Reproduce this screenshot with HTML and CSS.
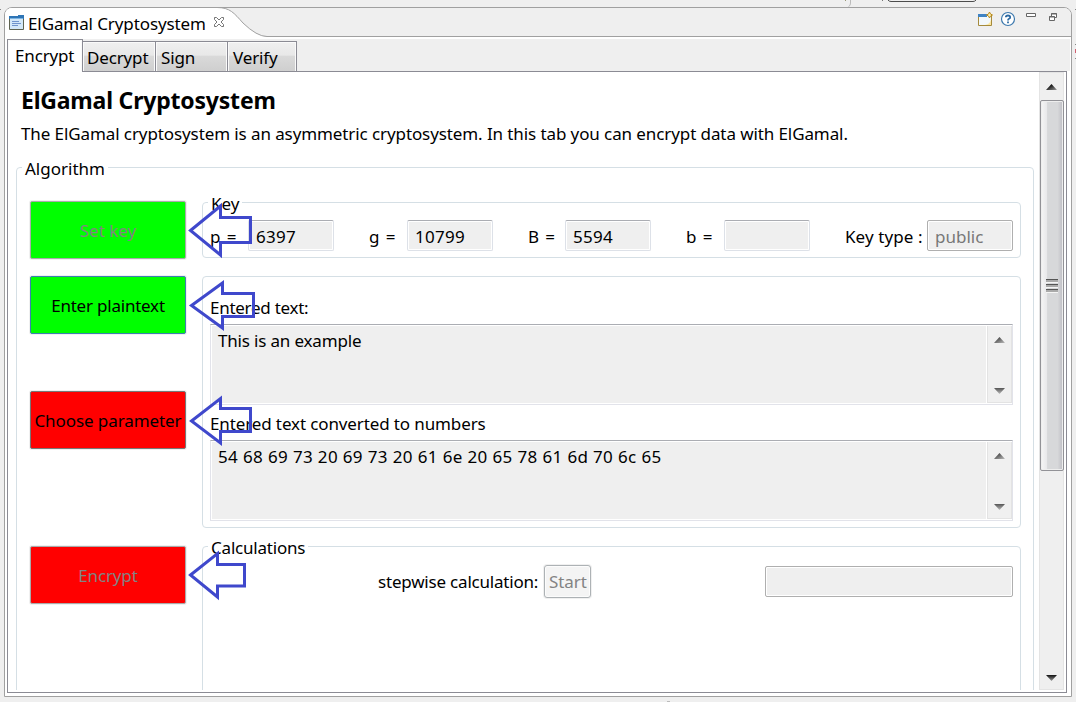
FILE: index.html
```
<!DOCTYPE html>
<html lang="en">
<head>
<meta charset="utf-8">
<title>ElGamal Cryptosystem</title>
<link rel="stylesheet" href="styles.css">
</head>
<body>
<svg class="edge" width="1076" height="702" viewBox="0 0 1076 702">
  <path d="M850.500 0v3q0 3-2 3.500" fill="none" stroke="#bbb"/>
  <path d="M845 0.500h1" stroke="#997"/><path d="M882.500 0v1" stroke="#777"/>
  <path d="M888 0q1 1.500 3 1.500h82q2 0 3-1.500" fill="none" stroke="#4c4c4c"/>
  <path d="M0 9.500h1M1075 9.500h1M1075 44.500h1M1075 58.500h1" stroke="#888"/>
  <path d="M1075.500 49v4" stroke="#d06070"/>
  <path d="M667 701.500h3" stroke="#bbb"/>
</svg>
<main class="part">
  <header class="part-head">
    <div class="part-tab">
      <svg class="tab-shape" width="270" height="32" viewBox="0 0 270 32">
        <path d="M0 32V7Q0 .5 7 .5H212C225 .5 229 6 238 16Q252 29.500 262 29.500H270V32Z" fill="#fff"/>
        <path d="M212 .5C225 .5 229 6 238 16Q252 29.500 262 29.500H270" fill="none" stroke="#a0a0a0"/>
      </svg>
      <svg class="doc-icon" width="16" height="16" viewBox="0 0 16 16">
        <path d="M.5 1.500h14v13H.5z" fill="#d3e8f8" stroke="#5e6350"/>
        <path d="M0 1h9V0h6v4H0z" fill="#2e75b6"/><path d="M1 3.500h13" stroke="#7db4e2"/>
        <path d="M3 6.500h7M3 8.500h9M3 10.500h6" stroke="#6f94cc"/>
      </svg>
      <span class="title">ElGamal Cryptosystem</span>
      <svg class="close" width="12" height="12" viewBox="0 0 12 12">
        <path d="M1.500 1.500h2L6 4l2.500-2.500h2v2L8 6l2.500 2.500v2h-2L6 8l-2.500 2.500h-2v-2L4 6 1.500 3.500z" fill="#fff" stroke="#666" stroke-width=".9"/>
      </svg>
    </div>
    <div class="tools">
      <svg width="16" height="16" viewBox="0 0 16 16">
        <path d="M1.500 3.500h13v11h-13z" fill="#f2f8fc" stroke="#a58a3c"/>
        <path d="M8 14q6-1 6-7v7z" fill="#fbe7a0"/>
        <path d="M1 3h9v3H1z" fill="#3f83c4"/>
        <path d="M12.500 1l1 2 2 1-2 1-1 2-1-2-2-1 2-1z" fill="#fff0b0" stroke="#b98a1c"/>
      </svg>
      <svg width="16" height="16" viewBox="0 0 16 16">
        <circle cx="8" cy="8" r="6.500" fill="#fff" stroke="#3b78ad" stroke-width="1.200"/>
        <path d="M5.800 6.300Q5.900 4.500 8 4.500T10.200 6.200Q10.200 7.200 9 7.800 8 8.300 8 9.400M8 10.500v1.800" fill="none" stroke="#2d6aa3" stroke-width="1.800"/>
      </svg>
      <svg width="16" height="16" viewBox="0 0 16 16"><path d="M3.500 2.500h9v3h-9z" fill="#fff" stroke="#666"/></svg>
      <svg width="16" height="16" viewBox="0 0 16 16">
        <path d="M5.500 2.500h5v4h-5z" fill="#fff" stroke="#666"/><path d="M5 3h6" stroke="#666"/>
        <path d="M3.500 5.500h5v4h-5z" fill="#fff" stroke="#666"/><path d="M3 6h6" stroke="#666"/>
      </svg>
    </div>
  </header>
  <nav class="tabs">
    <div class="tab active"><span>Encrypt</span></div>
    <div class="tab t-dec"><span>Decrypt</span></div>
    <div class="tab t-sign"><span>Sign</span></div>
    <div class="tab t-ver"><span>Verify</span></div>
  </nav>
  <div class="pane">
    <div class="content">
      <h1>ElGamal Cryptosystem</h1>
      <p class="desc"><span>The ElGamal cryptosystem is an asymmetric cryptosystem. In this tab you can encrypt data with ElGamal.</span></p>
      <section class="group algo">
        <div class="legend">Algorithm</div>
        <div class="columns">
          <div class="buttons">
            <div class="btn green off"><span>Set key</span></div>
            <div class="btn green focus"><span class="b-enter">Enter plaintext</span></div>
            <div class="btn red choose"><span class="b-choose">Choose parameter</span></div>
            <div class="btn red off enc"><span class="b-enc">Encrypt</span></div>
          </div>
          <div class="groups">
            <section class="group key">
              <div class="legend">Key</div>
              <div class="key-row">
                <span class="var">p =</span><div class="field"><span>6397</span></div>
                <span class="var">g =</span><div class="field"><span>10799</span></div>
                <span class="var">B =</span><div class="field"><span>5594</span></div>
                <span class="var">b =</span><div class="field"></div>
                <span class="key-type">Key type :</span><div class="field disabled"><span class="pub">public</span></div>
              </div>
            </section>
            <section class="group text">
              <div class="label"><span class="l-ent">Entered text:</span></div>
              <div class="area"><div class="area-text"><span class="a-one">This is an example</span></div>
                <div class="mini"><svg width="11" height="6" viewBox="0 0 11 6"><path d="M0 6L5.500 0 11 6z" fill="url(#up)"/></svg><svg width="11" height="6" viewBox="0 0 11 6"><path d="M0 0h11L5.500 6z" fill="url(#down)"/></svg></div>
              </div>
              <div class="label second"><span class="l-conv">Entered text converted to numbers</span></div>
              <div class="area"><div class="area-text"><span class="a-two">54 68 69 73 20 69 73 20 61 6e 20 65 78 61 6d 70 6c 65</span></div>
                <div class="mini"><svg width="11" height="6" viewBox="0 0 11 6"><path d="M0 6L5.500 0 11 6z" fill="url(#up)"/></svg><svg width="11" height="6" viewBox="0 0 11 6"><path d="M0 0h11L5.500 6z" fill="url(#down)"/></svg></div>
              </div>
            </section>
            <section class="group calc">
              <div class="legend"><span class="l-calc">Calculations</span></div>
              <div class="calc-row"><span class="step">stepwise calculation:</span><div class="start"><span>Start</span></div><div class="field disabled wide"></div></div>
            </section>
          </div>
        </div>
      </section>
    </div>
    <div class="scroll">
      <svg class="arr" width="11" height="6" viewBox="0 0 11 6"><defs>
        <linearGradient id="up" x1="0" y1="0" x2="1" y2="1"><stop offset=".2" stop-color="#444"/><stop offset="1" stop-color="#bbb"/></linearGradient>
        <linearGradient id="down" x1="0" y1="0" x2="0" y2="1"><stop offset="0" stop-color="#555"/><stop offset="1" stop-color="#bbb"/></linearGradient>
        <linearGradient id="dark" x1="0" y1="0" x2="1" y2="1"><stop offset=".3" stop-color="#111"/><stop offset="1" stop-color="#999"/></linearGradient>
        <linearGradient id="darkdown" x1="0" y1="0" x2="0" y2="1"><stop offset="0" stop-color="#111"/><stop offset="1" stop-color="#999"/></linearGradient></defs>
        <path d="M0 6L5.500 0 11 6z" fill="url(#dark)"/></svg>
      <div class="thumb"><i></i><i></i><i></i></div>
      <svg class="arr low" width="11" height="6" viewBox="0 0 11 6"><path d="M0 0h11L5.500 6z" fill="url(#darkdown)"/></svg>
    </div>
  </div>
</main>
<svg class="arrows" width="1076" height="702" viewBox="0 0 1076 702" fill="none" stroke="#3f48cc" stroke-width="3">
  <path d="M190.500 230.500L220.500 206V217.500H250.500V242.500H220.500V255z"/>
  <path d="M191.500 305.500L222.500 283V293.500H253.500V316.500H222.500V328z"/>
  <path d="M191.500 421L220.500 398.500V408.500H250.500V431.500H220.500V443z"/>
  <path d="M190.500 575L217.500 553.500V564.500H244.500V586H217.500V597z"/>
</svg>
</body>
</html>
```
FILE: styles.css
```
* { box-sizing: border-box; }
body { margin: 0; width: 1076px; height: 702px; padding: 7px 4px 0; overflow: hidden; position: relative; background: #efefef; font: 17px/24px "Noto Sans", "Open Sans", sans-serif; color: #000; }
h1, p { margin: 0; }
span { white-space: nowrap; }
.edge, .arrows { position: absolute; left: 0; top: 0; pointer-events: none; }
.part { height: 690px; border: 1px solid #a0a0a0; border-radius: 8px 8px 0 0; background: #fff; overflow: hidden; display: flex; flex-direction: column; }
.part-head { height: 29px; flex: none; display: flex; justify-content: space-between; background: #efefef; border-bottom: 1px solid #a0a0a0; }
.part-tab { position: relative; display: flex; width: 270px; height: 31px; padding-left: 4px; }
.tab-shape { position: absolute; left: 0; top: -1px; }
.doc-icon, .part-tab .title, .close { position: relative; }
.doc-icon { margin-top: 7px; }
.part-tab .title { margin: 4px 0 0 3px; width: 185px; letter-spacing: -0.1px; }
.close { margin-top: 8px; }
.tools { display: flex; gap: 7px; padding: 3px 9px 0 0; }
.tabs { height: 32px; margin: 2px 1px 0 2px; flex: none; display: flex; align-items: flex-end; background: #efefef; letter-spacing: -0.15px; }
.tab { height: 30px; border: 1px solid #8b8b94; border-left: 0; border-bottom: 0; padding: 4px 0 0 4px; background: linear-gradient(#f0f0f0 0, #e8e8e8 45%, #d9d9d9 50%, #cfcfcf 100%); box-shadow: inset 1px 1px #fafafa, inset -1px 0 #fafafa; }
.tab.active { width: 76px; height: 32px; border-left: 1px solid #8b8b94; background: #fff; padding: 4px 0 0 7px; }
.t-dec { width: 73px; }
.t-sign { width: 72px; padding-left: 5px; }
.t-ver { width: 69px; padding-left: 5px; }
.pane { width: 1060px; height: 622px; margin-left: 2px; flex: none; border: 1px solid #8b8b94; display: flex; position: relative; padding: 0 1px 2px 0; }
.pane::before { content: ""; position: absolute; left: 0; top: -1px; width: 74px; height: 1px; background: #fff; }
.content { width: 1031px; height: 618px; overflow: hidden; padding-left: 8px; }
h1 { font-size: 23px; line-height: 30px; font-weight: 700; padding: 13px 0 0 5px; letter-spacing: -0.2px; }
.desc { height: 24px; margin-top: 7px; padding-left: 5px; letter-spacing: -0.095px; }
.group { border: 1px solid #d5dfe5; border-radius: 4px; }
.legend { width: max-content; height: 24px; margin: -12px 0 0 5px; padding: 0 3px; background: #fff; }
.algo { width: 1018px; height: 560px; margin-top: 21px; }
.algo > .legend { margin-top: -11px; }
.columns { display: flex; padding-left: 13px; }
.buttons { width: 172px; padding-top: 20px; }
.btn { width: 156px; height: 58px; display: flex; align-items: center; justify-content: center; border: 1px solid #aaa; border-radius: 2px; box-shadow: 0 0 0 1px #f0f0f0; padding-top: 2px; }
.green { background: #0f0; }
.red { background: #f00; border-color: #777; }
.off { color: #838383; border-color: #aaa; }
.focus { margin-top: 17px; border-color: #3c7fb1; }
.choose { margin-top: 57px; }
.enc { margin-top: 97px; }
.b-enter { letter-spacing: -0.22px; }
.b-choose { letter-spacing: -0.08px; }
.b-enc { letter-spacing: -0.15px; }
.groups { width: 819px; padding-top: 21px; }
.key { height: 56px; }
.key > .legend { padding-top: 1px; }
.key-row { display: grid; grid-template-columns: 38px 121px 38px 121px 37px 121px 38px 121px 82px 86px; padding: 5px 0 0 7px; }
.key-row > span { padding-top: 5px; }
.var { letter-spacing: 0.9px; }
.key-type { letter-spacing: 0.1px; }
.field { width: 86px; height: 31px; background: #efefef; border: 1px solid #dde1e8; border-top-color: #abadb3; border-radius: 2px; box-shadow: inset 0 0 0 1px #fff; padding: 4px 0 0 7px; letter-spacing: 0.3px; }
.field.disabled { border-color: #afafaf; color: #787878; }
.pub { letter-spacing: 0; }
.text { height: 252px; margin-top: 18px; padding: 19px 7px 0; }
.label { height: 28px; }
.label.second { margin-top: 7px; }
.l-ent { letter-spacing: -0.27px; }
.l-conv { letter-spacing: -0.12px; }
.area { width: 803px; height: 81px; border: 1px solid #e2e3ea; border-top-color: #abadb3; box-shadow: inset 0 0 0 1px #fff; background: #efefef; display: flex; justify-content: space-between; padding: 1px 0 1px 7px; }
.area-text { padding-top: 3px; }
.a-one { letter-spacing: -0.17px; }
.a-two { letter-spacing: 0.28px; word-spacing: 0.26px; }
.mini { width: 25px; border: 1px solid #e3e3e3; border-top: 0; box-shadow: -1px 0 #fff; background: #f0f0f0; display: flex; flex-direction: column; justify-content: space-between; align-items: center; padding: 11px 0 8px; }
.calc { height: 200px; margin-top: 18px; }
.calc > .legend { padding-top: 1px; }
.l-calc { letter-spacing: -0.2px; }
.calc-row { display: grid; grid-template-columns: 166px 221px 248px; padding: 6px 0 0 175px; }
.step { padding-top: 5px; letter-spacing: -0.2px; }
.start { width: 47px; height: 33px; border: 1px solid #adb2b5; border-radius: 3px; background: #f4f4f4; color: #838383; padding: 4px 0 0 4px; box-shadow: 0 0 0 1px #f0f0f0, inset 0 0 0 1px #fcfcfc; letter-spacing: -0.1px; }
.wide { width: 248px; margin-top: 1px; }
.scroll { width: 25px; height: 618px; background: #efefef; border: 1px solid #e4e4e4; display: flex; flex-direction: column; align-items: center; position: relative; }
.arr { margin-top: 11px; flex: none; }
.thumb { width: 24px; height: 371px; margin-top: 10px; border: 1px solid #929297; border-radius: 2px; background: linear-gradient(90deg, #f6f6f6 0, #e9e9eb 25%, #d7d8da 30%, #d7d8da 75%, #bebec4 100%); box-shadow: inset 0 0 0 1px #eee; display: flex; flex-direction: column; align-items: center; justify-content: center; gap: 1px; flex: none; }
.thumb i { width: 12px; height: 4px; border-top: 1px solid #555; border-bottom: 1px solid #f5f5f5; background: #aaa; }
.low { margin-top: auto; margin-bottom: 8px; }
```
